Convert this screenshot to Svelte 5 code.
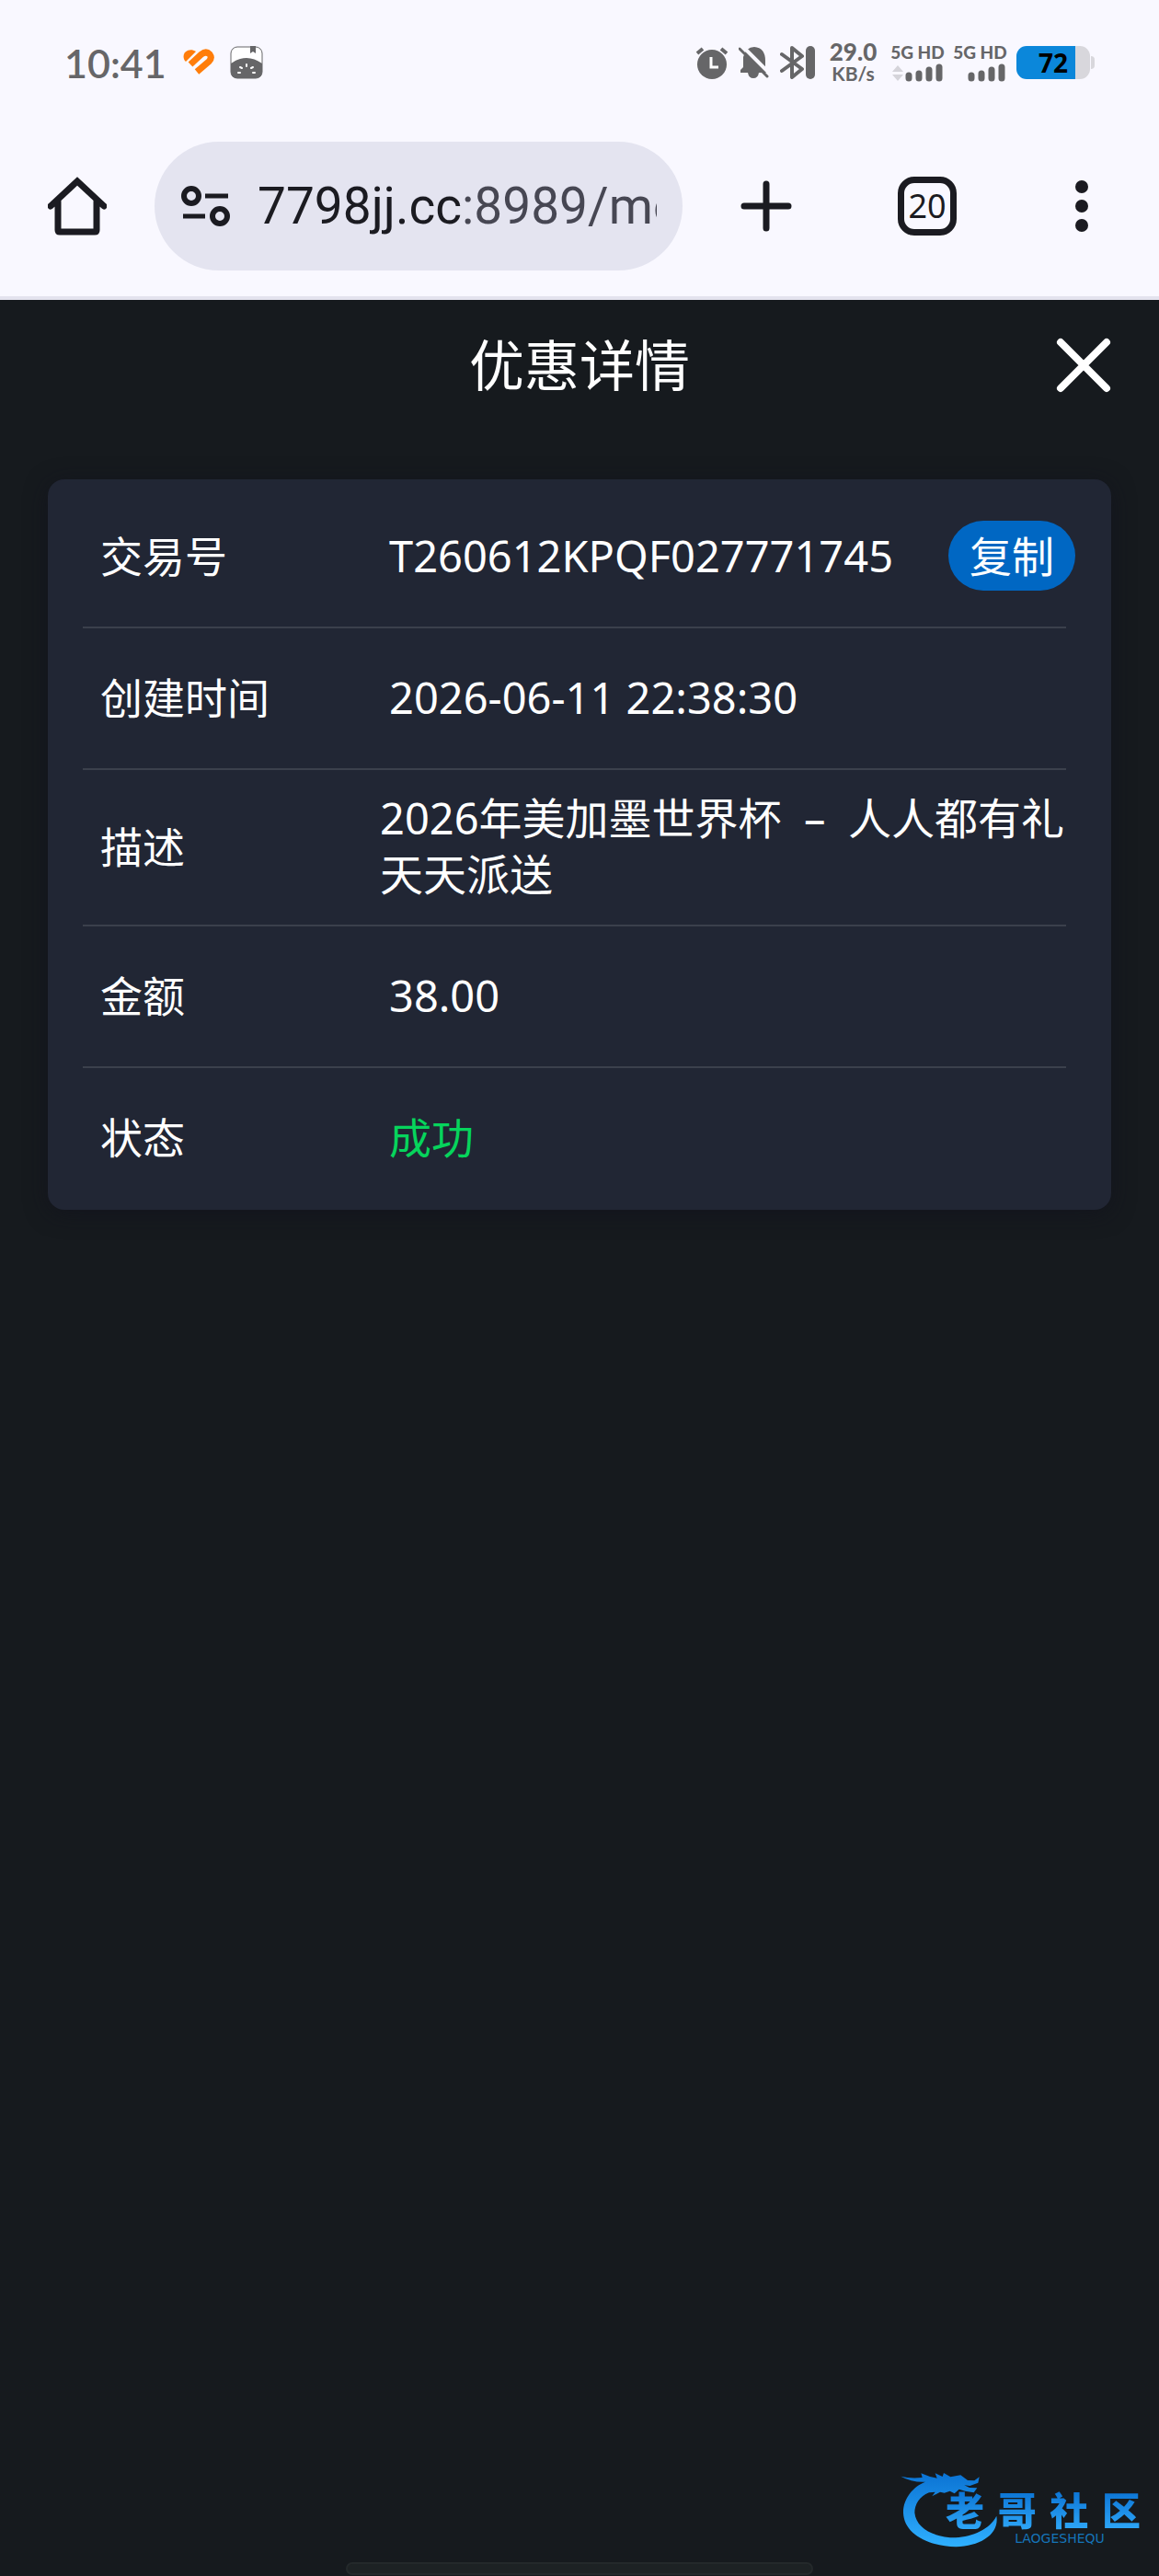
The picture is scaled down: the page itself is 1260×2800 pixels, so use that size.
<script lang="ts">
  export let title = '优惠详情';
  export let transactionId = 'T260612KPQF027771745';
  export let onClose = () => {};

  let url = '7798jj.cc:8989/mobile';

  const rows = [
    { label: '创建时间', value: '2026-06-11 22:38:30', kind: '' },
    { label: '描述', value: '2026年美加墨世界杯\u00a0\u00a0–\u00a0 人人都有礼天天派送', kind: 'long' },
    { label: '金额', value: '38.00', kind: '' },
    { label: '状态', value: '成功', kind: 'success' },
  ];

  function copyId() {
    navigator.clipboard?.writeText(transactionId);
  }
</script>

<div class="screen">
  <div class="status-bar">
    <span class="clock">10:41</span>
    <svg class="heart" width="34" height="30" viewBox="0 0 34 30" aria-hidden="true">
      <path d="M2 13C-3 5 6-2 14 3L3 14Z" fill="#ff7d0a" />
      <path d="M8 17 20 6Q25 2 29 6q3 4-1 8L15 25" fill="none" stroke="#ff7d0a" stroke-width="7" />
    </svg>
    <svg width="36" height="36" viewBox="0 0 36 36" aria-hidden="true">
      <rect x="1" y="1" width="34" height="34" rx="7" fill="#fff" stroke="#666668" />
      <path d="M1 19q17-12 34 0v9q0 7-7 7H8q-7 0-7-7ZM22 0h6v8l-3-2-3 2Z" fill="#666668" />
      <path d="M9 29h2M25 29h2M11 23l2 1M25 23l-2 1M18 20v2" stroke="#fff" stroke-width="2" stroke-linecap="round" />
    </svg>

    <div class="indicators">
      <svg width="36" height="36" viewBox="0 0 36 36" aria-hidden="true">
        <circle cx="18" cy="20" r="16" fill="#666668" />
        <path d="M2 8l6-5M34 8l-6-5" stroke="#666668" stroke-width="4" />
        <path d="M17 12v11h8" fill="none" stroke="#fff" stroke-width="3" />
      </svg>
      <svg width="34" height="36" viewBox="0 0 34 36" aria-hidden="true">
        <path d="M5 12Q8 1 17 1q12 1 12 15v10l2 3H22q-1 6-6 6t-6-6H2v-3l3-3Z" fill="#666668" />
        <path d="M4 0l30 30" stroke="#f9f8ff" stroke-width="4" />
        <path d="M1 3l30 30" stroke="#666668" stroke-width="3" stroke-linecap="round" />
      </svg>
      <svg width="38" height="36" viewBox="0 0 38 36" aria-hidden="true">
        <path d="M2 9l22 16-11 9V2l11 9L2 27" fill="none" stroke="#666668" stroke-width="4" stroke-linejoin="round" stroke-linecap="round" />
        <rect x="28" y="0" width="10" height="36" rx="5" fill="#666668" />
      </svg>
      <div class="speed"><b>29.0</b><span>KB/s</span></div>
      {#each [true, false] as arrows}
        <div class="cell">
          <span>5G HD</span>
          <svg width="56" height="20" viewBox="0 0 56 20" aria-hidden="true">
            {#if arrows}
              <path d="M0 9l6-7 6 7ZM0 12h12l-6 7Z" fill="#d5d4da" />
            {/if}
            <path d="M18 13v3M29 11v5M40 7v9M51 4v12" stroke="#666668" stroke-width="7" stroke-linecap="round" />
          </svg>
        </div>
      {/each}
      <div class="battery">
        <div class="battery-body"><span>72</span></div>
        <i></i>
      </div>
    </div>
  </div>

  <div class="toolbar">
    <button class="tool" aria-label="主页">
      <svg width="64" height="64" viewBox="0 0 64 64">
        <path d="M3 32 32 5l29 27M11 25v33q0 2 2 2h38q2 0 2-2V25" fill="none" stroke="#1b1b21" stroke-width="7" stroke-linecap="round" />
      </svg>
    </button>
    <div class="omnibox">
      <svg width="54" height="44" viewBox="0 0 54 44" aria-hidden="true">
        <g fill="none" stroke="#1b1b21" stroke-width="6">
          <circle cx="11" cy="11" r="8" />
          <circle cx="42" cy="33" r="8" />
          <path d="M26 11h25M2 33h24" stroke-width="5" />
        </g>
      </svg>
      <input type="text" aria-label="网址" bind:value={url} />
    </div>
    <button class="tool" aria-label="新标签页">
      <svg width="56" height="56" viewBox="0 0 56 56">
        <path d="M28 4v48M4 28h48" stroke="#1b1b21" stroke-width="7" stroke-linecap="round" />
      </svg>
    </button>
    <button class="tool tabs" aria-label="标签页">20</button>
    <button class="tool menu" aria-label="菜单">
      <svg width="14" height="56" viewBox="0 0 14 56" fill="#1b1b21">
        <circle cx="7" cy="7" r="7" />
        <circle cx="7" cy="28" r="7" />
        <circle cx="7" cy="49" r="7" />
      </svg>
    </button>
  </div>

  <main>
    <header>
      <h1>{title}</h1>
      <button class="close" on:click={() => onClose()} aria-label="关闭">
        <svg width="60" height="60" viewBox="0 0 60 60">
          <path d="M5 5l50 50M55 5 5 55" stroke="#fff" stroke-width="8" stroke-linecap="round" />
        </svg>
      </button>
    </header>

    <dl class="card">
      <div class="row">
        <dt>交易号</dt>
        <dd class="with-action">
          {transactionId}
          <button class="copy" on:click={copyId}>复制</button>
        </dd>
      </div>
      {#each rows as row}
        <div class="row">
          <dt>{row.label}</dt>
          <dd class={row.kind}>{row.value}</dd>
        </div>
      {/each}
    </dl>
  </main>

  <div class="brand">
    <svg width="112" height="94" viewBox="116 56 336 282" aria-hidden="true">
      <defs>
        <linearGradient id="brand-blue" x1="0" y1="0" x2="0" y2="1">
          <stop offset="0" stop-color="#0b73d4" />
          <stop offset="1" stop-color="#2fb0ff" />
        </linearGradient>
      </defs>
      <path
        d="M120 97Q150 105 190 101L186 87 215 98 238 103 232 87 256 98 260 86 282 99 315 93 338 110 360 111 376 99 372 118 345 128 327 126 344 134 369 135 358 150 330 145 310 139 295 153 280 145 262 151 248 148 222 162 232 148 212 150C180 163 165 190 165 216 170 268 230 297 299 297 355 293 410 270 432 226 442 286 380 325 300 327 202 324 130 282 128 216 127 170 160 130 200 115Q155 117 120 97Z"
        fill="url(#brand-blue)"
      />
    </svg>
    <div class="brand-name">
      {#each '老哥社区' as char}<span>{char}</span>{/each}
    </div>
    <span class="brand-latin">LAOGESHEQU</span>
  </div>
  <div class="gesture-bar"></div>
</div>

<style>
  :global(body) {
    background: #161a1e;
  }

  .screen {
    position: relative;
    display: flex;
    flex-direction: column;
    min-height: 100vh;
    box-sizing: border-box;
    overflow: hidden;
    background: #161a1e;
    color: #fff;
    font-family: 'Noto Sans', 'Noto Sans CJK SC', sans-serif;
  }

  button {
    padding: 0;
    border: none;
    background: none;
    color: inherit;
    font: inherit;
    cursor: pointer;
  }

  svg {
    display: block;
    flex: none;
  }

  .status-bar {
    display: flex;
    align-items: center;
    height: 136px;
    padding: 0 70px;
    background: #f9f8ff;
    color: #666668;
  }

  .clock {
    font-family: Lato, sans-serif;
    font-size: 43px;
    font-weight: 600;
  }

  .heart {
    margin: 0 17px 0 18px;
  }

  .indicators {
    display: flex;
    align-items: center;
    gap: 11px;
    margin-left: auto;
  }

  .speed,
  .cell {
    display: flex;
    flex-direction: column;
    align-items: center;
    font-family: Lato, sans-serif;
    font-weight: 700;
  }

  .speed {
    width: 61px;
    font-size: 21px;
    line-height: 23px;
  }

  .speed b {
    font-size: 26px;
  }

  .cell {
    width: 57px;
    gap: 2px;
    font-size: 19px;
    font-weight: 900;
    line-height: 20px;
    white-space: nowrap;
  }

  .battery {
    display: flex;
    align-items: center;
    gap: 1px;
  }

  .battery-body {
    width: 80px;
    border-radius: 11px;
    background: linear-gradient(90deg, #0b87da 80%, #d8d7dc 80%);
    color: #000;
    font-size: 28px;
    font-weight: 700;
    line-height: 36px;
    text-align: center;
  }

  .battery i {
    width: 4px;
    height: 14px;
    border-radius: 0 4px 4px 0;
    background: #d8d7dc;
  }

  .toolbar {
    display: flex;
    align-items: center;
    padding: 18px 59px 28px 52px;
    border-bottom: 4px solid #e4e3ee;
    background: #f9f8ff;
    color: #1b1b21;
  }

  .tool {
    display: flex;
    flex: none;
    align-items: center;
    justify-content: center;
    width: 64px;
    height: 64px;
  }

  .omnibox {
    display: flex;
    flex: 1;
    align-items: center;
    gap: 29px;
    min-width: 0;
    height: 140px;
    margin: 0 59px 0 52px;
    padding: 0 28px 0 29px;
    box-sizing: border-box;
    border-radius: 70px;
    background: #e4e4f0;
  }

  /* host in the dark tone, port and path in the lighter one */
  .omnibox input {
    flex: 1;
    min-width: 0;
    padding: 0;
    border: none;
    outline: none;
    background: linear-gradient(90deg, #1b1b21 222px, #474753 222px);
    background-clip: text;
    color: transparent;
    font-family: Roboto, sans-serif;
    font-size: 55px;
    line-height: 80px;
  }

  .tabs {
    margin: 0 111px;
    border: 7px solid #1b1b21;
    border-radius: 18px;
    font-size: 36px;
    line-height: 48px;
  }

  .menu {
    width: 50px;
  }

  main {
    flex: 1;
    padding: 0 52px;
  }

  header {
    display: grid;
    grid-template-columns: 60px 1fr 60px;
    align-items: center;
    height: 142px;
    margin-bottom: 53px;
  }

  h1 {
    grid-column: 2;
    margin: 0;
    font-size: 60px;
    font-weight: 400;
    line-height: 84px;
    text-align: center;
  }

  .card {
    margin: 0;
    padding: 8px 49px 0 38px;
    border-radius: 18px;
    background: #212634;
    box-shadow: 0 4px 24px rgba(16, 16, 28, 0.6);
    font-size: 46px;
    line-height: 61px;
  }

  .row {
    display: flex;
    align-items: center;
    min-height: 150px;
    padding: 0 0 2px 19px;
    border-bottom: 2px solid #3b404c;
  }

  .row:last-child {
    border-bottom-color: transparent;
  }

  dt {
    flex: none;
    width: 314px;
  }

  dd {
    flex: 1;
    margin: 0;
    font-size: 47px;
  }

  .with-action {
    display: flex;
    align-items: center;
    justify-content: space-between;
    margin-right: -10px;
  }

  .long {
    margin-right: -10px;
    margin-left: -10px;
    padding: 22px 0;
  }

  .success {
    color: #06d45c;
    font-size: 46px;
  }

  .copy {
    padding: 0 23px;
    border-radius: 38px;
    background: #0067c3;
    font-size: 46px;
    line-height: 76px;
  }

  .brand {
    position: absolute;
    right: 20px;
    bottom: 28px;
    width: 262px;
  }

  .brand-name {
    position: absolute;
    top: 29px;
    right: 0;
    display: flex;
    justify-content: space-between;
    width: 212px;
    background: linear-gradient(#0b73d4, #2fa8f8);
    background-clip: text;
    color: transparent;
    font-size: 42px;
    font-weight: 900;
    line-height: 44px;
  }

  .brand-latin {
    position: absolute;
    top: 74px;
    right: 24px;
    width: 128px;
    color: #1574b8;
    font-family: 'DejaVu Sans', sans-serif;
    font-size: 14px;
    line-height: 14px;
    text-align: center;
  }

  .gesture-bar {
    width: 508px;
    height: 14px;
    margin: 0 auto 1px;
    box-sizing: border-box;
    border: 2px solid #24292b;
    border-radius: 7px;
    background: #1d2224;
  }
</style>
